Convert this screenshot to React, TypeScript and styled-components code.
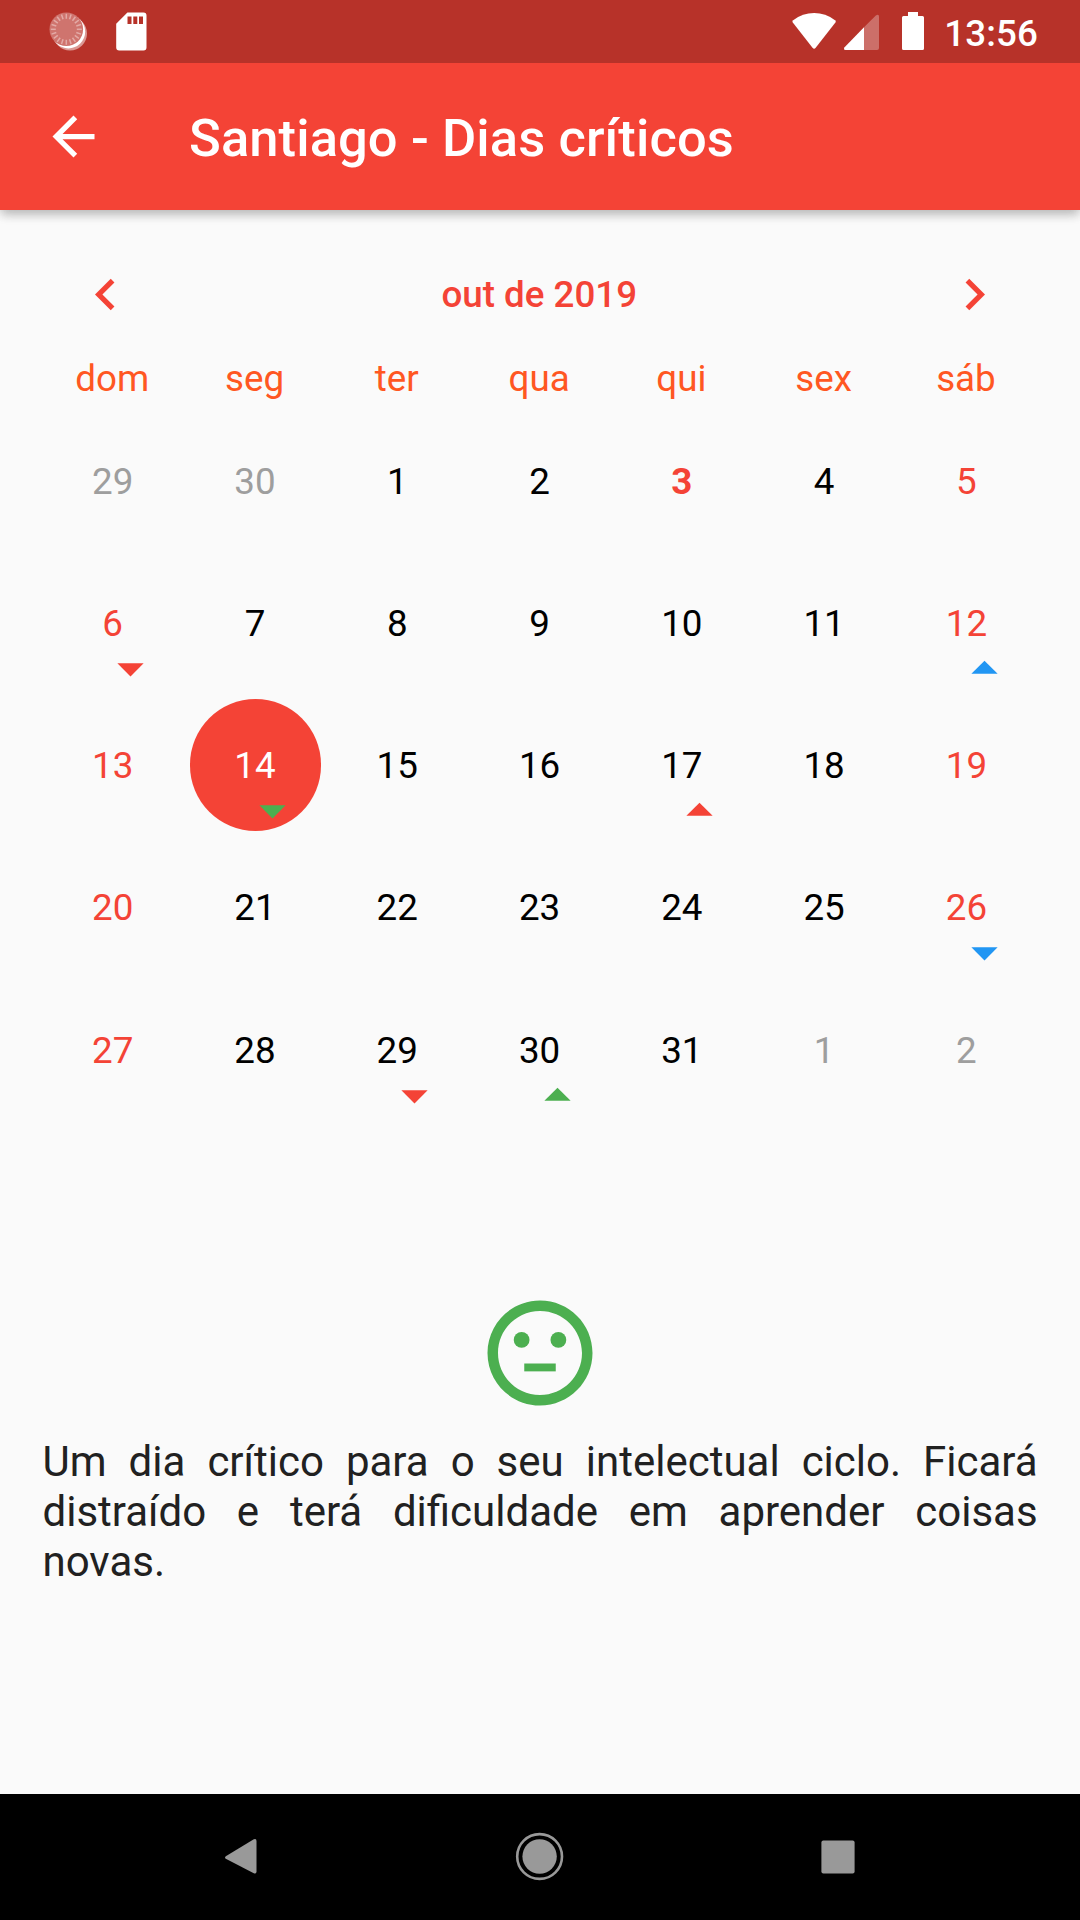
import React from "react";
import styled, { createGlobalStyle } from "styled-components";

const RED = "#f44336";
const GREEN = "#4caf50";
const BLUE = "#2196f3";

const GlobalStyle = createGlobalStyle`
  *, *::before, *::after { box-sizing: border-box; }
  html, body { margin: 0; padding: 0; background: #fafafa; }
  body { font-family: Roboto, "Noto Sans", sans-serif; }
  button { font: inherit; color: inherit; background: none; border: 0; padding: 0; margin: 0; }
  svg { display: block; }
`;

const Screen = styled.div`
  width: 1080px;
  height: 1920px;
  display: flex;
  flex-direction: column;
  overflow: hidden;
  background: #fafafa;
`;

const StatusBar = styled.header`
  flex: none;
  position: relative;
  z-index: 2;
  height: 63px;
  display: flex;
  justify-content: space-between;
  background: #b73229;
  color: #fff;
`;

const StatusLeft = styled.div`
  display: flex;
  align-items: flex-start;
  gap: 29px;
  padding: 12px 0 0 49px;
`;

const StatusRight = styled.div`
  display: flex;
  align-items: flex-start;
  padding: 12px 42px 0 0;
`;

const Clock = styled.time`
  margin-left: 19.4px;
  font-size: 36.75px;
  font-weight: 500;
  line-height: 43px;
  letter-spacing: 0.12px;
  white-space: nowrap;
`;

const AppBar = styled.div`
  flex: none;
  position: relative;
  z-index: 1;
  height: 147px;
  display: flex;
  align-items: center;
  padding: 0 42px;
  background: ${RED};
  color: #fff;
  box-shadow: 0 5px 10px -2px rgba(0, 0, 0, 0.16), 0 6px 10px rgba(0, 0, 0, 0.09),
    0 2px 12px rgba(0, 0, 0, 0.08);
`;

const IconButton = styled.button`
  width: 63px;
  height: 63px;
  flex: none;
`;

const Title = styled.h1`
  margin: 0 0 0 84px;
  padding-top: 3px;
  font-size: 52.5px;
  line-height: 62px;
  font-weight: 500;
  letter-spacing: 0.09px;
  white-space: nowrap;
`;

const Content = styled.main`
  flex: 1;
  display: flex;
  flex-direction: column;
  padding: 42px 42px 0;
`;

const MonthHeader = styled.div`
  height: 85px;
  display: flex;
  align-items: center;
  justify-content: space-between;
  padding: 0 32px;
  color: ${RED};
`;

const MonthTitle = styled.h2`
  margin: 0;
  padding-right: 1.5px;
  font-size: 36.75px;
  line-height: 43px;
  font-weight: 500;
`;

const Weekdays = styled.div`
  margin-top: 10.4px;
  height: 62px;
  display: grid;
  grid-template-columns: repeat(7, 1fr);
  align-items: center;
  color: #ff5722;
  font-size: 36.75px;
  line-height: 43px;
  text-align: center;
`;

const Weekday = styled.span`
  padding-right: 1.8px;
`;

const DayGrid = styled.div`
  display: grid;
  grid-template-columns: repeat(7, 1fr);
  grid-auto-rows: 142.286px;
`;

type Tone = "normal" | "weekend" | "outside" | "today" | "selected";

const toneColor: Record<Tone, string> = {
  normal: "#000",
  weekend: RED,
  outside: "#9e9e9e",
  today: RED,
  selected: "#fff",
};

const DayCell = styled.div<{ $tone: Tone }>`
  position: relative;
  margin: 5.25px;
  display: flex;
  align-items: center;
  justify-content: center;
  padding: 1.2px 0.9px 0 0;
  border-radius: 50%;
  background: ${(p) => (p.$tone === "selected" ? RED : "transparent")};
  color: ${(p) => toneColor[p.$tone]};
  font-size: 36.75px;
  line-height: 43px;
  font-weight: ${(p) => (p.$tone === "today" ? 700 : 400)};
`;

const Marker = styled.svg`
  position: absolute;
  right: 17.2px;
  bottom: -11.2px;
  width: 63px;
  height: 63px;
`;

const Reading = styled.section`
  margin-top: 169.2px;
  display: flex;
  flex-direction: column;
  align-items: center;
`;

const Message = styled.p`
  width: 100%;
  margin: 21.2px 0 0;
  padding: 0 0.4px 0 0.5px;
  color: #212121;
  font-size: 42px;
  line-height: 50px;
  text-align: justify;
`;

const NavBar = styled.nav`
  flex: none;
  height: 126px;
  display: flex;
  align-items: center;
  justify-content: space-between;
  padding: 0 210px;
  background: #000;
`;

const NavButton = styled.button`
  width: 63px;
  height: 63px;
`;

type Mark = { up: boolean; color: string };

const marks: Record<string, Mark> = {
  "6": { up: false, color: RED },
  "12": { up: true, color: BLUE },
  "14": { up: false, color: GREEN },
  "17": { up: true, color: RED },
  "26": { up: false, color: BLUE },
  "29": { up: false, color: RED },
  "30": { up: true, color: GREEN },
};

const weekdays = ["dom", "seg", "ter", "qua", "qui", "sex", "sáb"];

const days = Array.from({ length: 35 }, (_, i) => {
  const n = i - 1;
  const outside = n < 1 || n > 31;
  const value = n < 1 ? n + 30 : n > 31 ? n - 31 : n;
  let tone: Tone = "normal";
  if (outside) tone = "outside";
  else if (n === 14) tone = "selected";
  else if (n === 3) tone = "today";
  else if (i % 7 === 0 || i % 7 === 6) tone = "weekend";
  return { value, tone, mark: outside ? undefined : marks[String(value)] };
});

const ticks = Array.from({ length: 20 }, (_, i) => i * 18);

const LoadingIcon = () => (
  <svg width="38" height="40" viewBox="0 0 38 40">
    <circle cx="21" cy="21.5" r="17" fill="#fff" opacity="0.5" />
    <circle cx="19.4" cy="19.6" r="16.8" fill="#fff" />
    <circle cx="17.3" cy="17.3" r="16.8" fill="#cf746e" />
    {ticks.map((a) => (
      <line
        key={a}
        x1="17.3"
        y1="1.8"
        x2="17.3"
        y2="6.8"
        stroke="#e3aaa6"
        strokeWidth="1.5"
        transform={`rotate(${a} 17.3 17.3)`}
      />
    ))}
  </svg>
);

const SdIcon = () => (
  <svg width="31" height="39" viewBox="0 0 31 39">
    <path
      fill="#fff"
      fillRule="evenodd"
      d="M11.4 .6H27.500a3 3 0 0 1 3 3V35.400a3 3 0 0 1-3 3H3.200a3 3 0 0 1-3-3V11.800zM11.500 4.500v7.500h4v-7.500zM17.300 4.500v7.500h4v-7.500zM23 4.500v7.500h4v-7.500z"
    />
  </svg>
);

const App = () => (
  <>
    <GlobalStyle />
    <Screen>
      <StatusBar>
        <StatusLeft>
          <LoadingIcon />
          <SdIcon />
        </StatusLeft>
        <StatusRight>
          <svg width="134" height="40" viewBox="0 0 134 40">
            <path
              fill="#fff"
              d="M1.800 10.600Q.8 9.300 2.200 8.200C8.500 3.500 15.500 1 23.100 1S37.700 3.500 44 8.200Q45.400 9.300 44.400 10.600L24.700 35.800Q23.100 37.800 21.500 35.800z"
            />
            <path fill="#fff" opacity="0.3" d="M73 15.200 84.800 3.400Q88 1.500 88 4.500V36Q88 38 86 38H73z" />
            <path fill="#fff" d="M73 15.200V38H54.500Q52 37.600 53.600 35.200z" />
            <path
              fill="#fff"
              d="M117 0h10v4h4.500a1.500 1.500 0 0 1 1.500 1.500v31a1.500 1.500 0 0 1-1.500 1.500h-19a1.500 1.500 0 0 1-1.500-1.500v-31a1.500 1.500 0 0 1 1.500-1.500H117z"
            />
          </svg>
          <Clock>13:56</Clock>
        </StatusRight>
      </StatusBar>
      <AppBar>
        <IconButton aria-label="Voltar">
          <svg width="63" height="63" viewBox="0 0 24 24" fill="#fff">
            <path d="M20 11H7.830l5.590-5.590L12 4l-8 8 8 8 1.410-1.410L7.830 13H20v-2z" />
          </svg>
        </IconButton>
        <Title>Santiago - Dias críticos</Title>
      </AppBar>
      <Content>
        <MonthHeader>
          <IconButton aria-label="Mês anterior">
            <svg width="63" height="63" viewBox="0 0 24 24" fill={RED}>
              <path d="M15.410 7.410L14 6l-6 6 6 6 1.410-1.410L10.830 12z" />
            </svg>
          </IconButton>
          <MonthTitle>out de 2019</MonthTitle>
          <IconButton aria-label="Próximo mês">
            <svg width="63" height="63" viewBox="0 0 24 24" fill={RED}>
              <path d="M10 6L8.590 7.410 13.170 12l-4.580 4.590L10 18l6-6z" />
            </svg>
          </IconButton>
        </MonthHeader>
        <Weekdays>
          {weekdays.map((d) => (
            <Weekday key={d}>{d}</Weekday>
          ))}
        </Weekdays>
        <DayGrid>
          {days.map((d, i) => (
            <DayCell key={i} $tone={d.tone}>
              {d.value}
              {d.mark && (
                <Marker viewBox="0 0 24 24" fill={d.mark.color}>
                  <path d={d.mark.up ? "M7 14l5-5 5 5z" : "M7 10l5 5 5-5z"} />
                </Marker>
              )}
            </DayCell>
          ))}
        </DayGrid>
        <Reading>
          <svg width="126" height="126" viewBox="0 0 24 24" fill={GREEN}>
            <path d="M9 14h6v1.500H9z" />
            <circle cx="15.5" cy="9.5" r="1.5" />
            <circle cx="8.5" cy="9.5" r="1.5" />
            <path d="M11.990 2C6.470 2 2 6.480 2 12s4.470 10 9.990 10C17.520 22 22 17.520 22 12S17.520 2 11.990 2zM12 20c-4.420 0-8-3.580-8-8s3.580-8 8-8 8 3.580 8 8-3.580 8-8 8z" />
          </svg>
          <Message>
            Um dia crítico para o seu intelectual ciclo. Ficará distraído e terá dificuldade em
            aprender coisas novas.
          </Message>
        </Reading>
      </Content>
      <NavBar>
        <NavButton aria-label="Voltar">
          <svg width="63" height="63" viewBox="0 0 63 63">
            <path
              fill="#999"
              d="M15.800 30.200 43.800 13.300Q46.500 12.200 46.500 15V45.500Q46.500 48.300 43.800 47.200L15.800 32.800Q14.200 31.500 15.800 30.200z"
            />
          </svg>
        </NavButton>
        <NavButton aria-label="Início">
          <svg width="63" height="63" viewBox="0 0 63 63">
            <circle cx="30.600" cy="30.500" r="17.2" fill="#999" />
            <circle cx="30.600" cy="30.500" r="22.400" fill="none" stroke="#999" strokeWidth="2.6" />
          </svg>
        </NavButton>
        <NavButton aria-label="Recentes">
          <svg width="63" height="63" viewBox="0 0 63 63">
            <rect x="14.400" y="14.400" width="33.200" height="33.200" rx="2" fill="#999" />
          </svg>
        </NavButton>
      </NavBar>
    </Screen>
  </>
);

export default App;
